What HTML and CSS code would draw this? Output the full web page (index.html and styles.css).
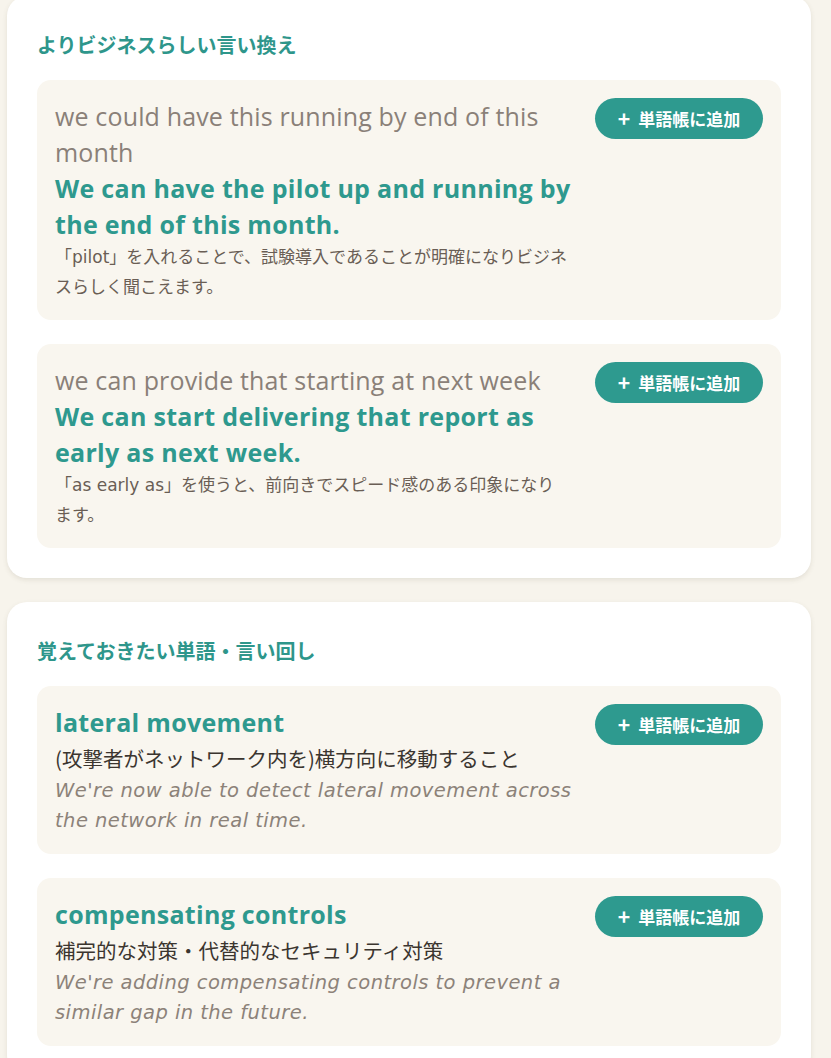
FILE: index.html
```html
<!DOCTYPE html>
<html lang="ja">
<head>
<meta charset="utf-8">
<title>言い換え</title>
<link rel="stylesheet" href="styles.css">
</head>
<body>
<div class="page">
  <section class="card">
    <h2 class="card-title">よりビジネスらしい言い換え</h2>
    <div class="items">
      <div class="item">
        <div class="item-body">
          <p class="original">we could have this running by end of this month</p>
          <p class="better">We can have the pilot up and running by the end of this month.</p>
          <p class="note">「pilot」を入れることで、試験導入であることが明確になりビジネスらしく聞こえます。</p>
        </div>
        <button class="add-btn" type="button"><span class="plus">+</span>単語帳に追加</button>
      </div>
      <div class="item">
        <div class="item-body">
          <p class="original">we can provide that starting at next week</p>
          <p class="better">We can start delivering that report as early as next week.</p>
          <p class="note">「as early as」を使うと、前向きでスピード感のある印象になります。</p>
        </div>
        <button class="add-btn" type="button"><span class="plus">+</span>単語帳に追加</button>
      </div>
    </div>
  </section>

  <section class="card">
    <h2 class="card-title">覚えておきたい単語・言い回し</h2>
    <div class="items">
      <div class="item">
        <div class="item-body">
          <p class="term">lateral movement</p>
          <p class="meaning">(攻撃者がネットワーク内を)横方向に移動すること</p>
          <p class="example">We're now able to detect lateral movement across the network in real time.</p>
        </div>
        <button class="add-btn" type="button"><span class="plus">+</span>単語帳に追加</button>
      </div>
      <div class="item">
        <div class="item-body">
          <p class="term">compensating controls</p>
          <p class="meaning">補完的な対策・代替的なセキュリティ対策</p>
          <p class="example">We're adding compensating controls to prevent a similar gap in the future.</p>
        </div>
        <button class="add-btn" type="button"><span class="plus">+</span>単語帳に追加</button>
      </div>
    </div>
  </section>
</div>
</body>
</html>
```

FILE: styles.css
```css
html, body {
  margin: 0;
  padding: 0;
}

body {
  background: #f7f4ec;
  font-family: "Open Sans", "Noto Sans CJK JP", sans-serif;
  color: #3b352f;
}

.page {
  display: flex;
  flex-direction: column;
  gap: 24px;
  margin-top: -4px;
  padding: 0 20px 20px 7px;
}

.card {
  background: #ffffff;
  border-radius: 20px;
  padding: 34px 30px 30px;
  box-shadow: 0 2px 5px rgba(90, 80, 60, 0.12);
}

.card-title {
  margin: 0 0 20px;
  font-family: "Noto Sans CJK JP", sans-serif;
  font-size: 20px;
  line-height: 30px;
  font-weight: 700;
  color: #2e968b;
}

.items {
  display: flex;
  flex-direction: column;
  gap: 24px;
}

.item {
  display: flex;
  align-items: flex-start;
  gap: 20px;
  padding: 18px;
  background: #f9f6ef;
  border-radius: 14px;
}

.item-body {
  flex: 1;
  min-width: 0;
}

.item-body p {
  margin: 0;
}

.original {
  font-size: 25px;
  line-height: 36px;
  letter-spacing: 0.15px;
  color: #8a8078;
}

.better,
.term {
  font-size: 25px;
  line-height: 36px;
  font-weight: 700;
  letter-spacing: 0.3px;
  color: #2e998e;
}

.note {
  max-width: 516px;
  font-family: "DejaVu Sans", "Noto Sans CJK JP", sans-serif;
  font-size: 17px;
  line-height: 30px;
  color: #6a5e55;
}

.meaning {
  font-family: "Noto Sans CJK JP", sans-serif;
  font-size: 20.5px;
  line-height: 36px;
  color: #3b352f;
}

.example {
  font-family: "DejaVu Sans", sans-serif;
  font-style: italic;
  font-size: 19.5px;
  line-height: 30px;
  letter-spacing: 0.45px;
  color: #8c8279;
}

.add-btn {
  flex: none;
  display: flex;
  align-items: center;
  justify-content: center;
  gap: 8px;
  width: 168px;
  height: 41px;
  padding: 0;
  border: 0;
  border-radius: 21px;
  background: #2e9a8f;
  color: #ffffff;
  font-family: "Noto Sans CJK JP", sans-serif;
  font-size: 17px;
  font-weight: 700;
  cursor: pointer;
}

.plus {
  font-size: 21px;
  line-height: 1;
  font-weight: 700;
}
```
